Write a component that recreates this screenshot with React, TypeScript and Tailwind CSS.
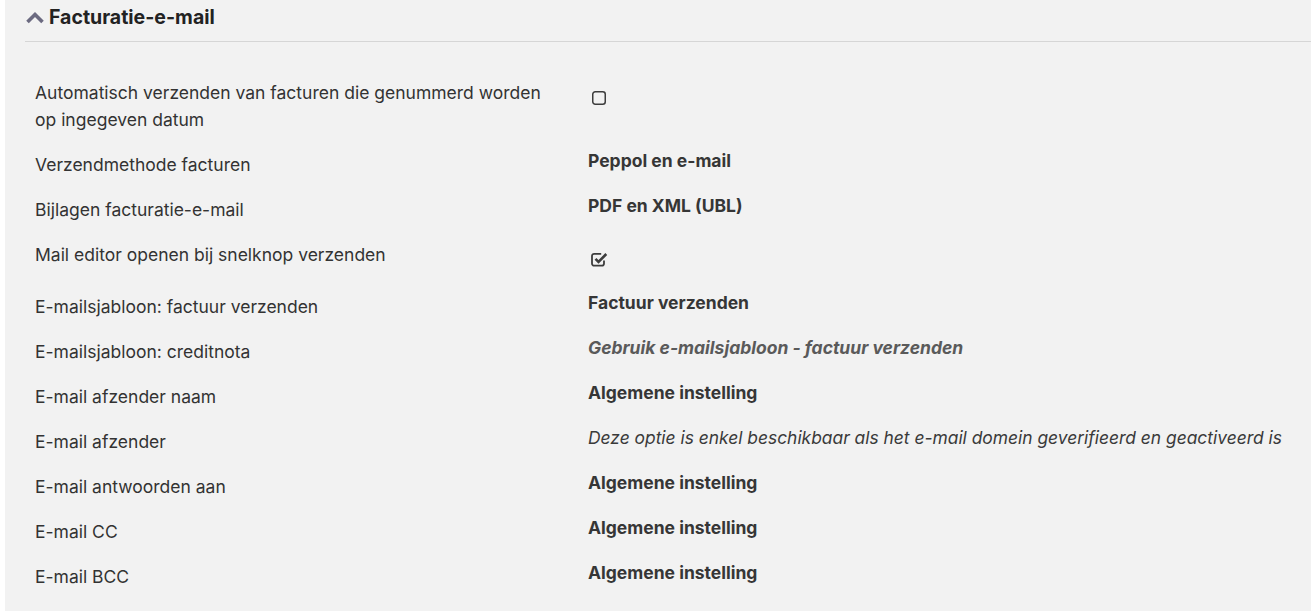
import React from 'react';

type Row = {
  label: string;
  value: React.ReactNode;
  tall?: boolean;
};

const Unchecked = () => (
  <svg width="16" height="16" viewBox="0 0 16 16" className="mt-[15px] ml-[3px]">
    <rect x="1.75" y="1.75" width="12.5" height="12.5" rx="2.5" fill="none" stroke="#3d3d3d" strokeWidth="1.5" />
  </svg>
);

const Checked = () => (
  <svg width="19" height="19" viewBox="0 0 19 19" className="mt-[13px] ml-[2px]">
    <path d="M14 10.5v3a2.2 2.2 0 0 1-2.2 2.2H4.2A2.2 2.2 0 0 1 2 13.5V6a2.2 2.2 0 0 1 2.2-2.2h7" fill="none" stroke="#3d3d3d" strokeWidth="1.8" />
    <path d="M5.5 8.8l3 3L16.3 4" fill="none" stroke="#3d3d3d" strokeWidth="2.6" />
  </svg>
);

const Bold = ({ children }: { children: React.ReactNode }) => (
  <span className="font-bold text-[#363636]">{children}</span>
);

const rows: Row[] = [
  { label: 'Automatisch verzenden van facturen die genummerd worden op ingegeven datum', value: <Unchecked /> },
  { label: 'Verzendmethode facturen', value: <Bold>Peppol en e-mail</Bold> },
  { label: 'Bijlagen facturatie-e-mail', value: <Bold>PDF en XML (UBL)</Bold> },
  { label: 'Mail editor openen bij snelknop verzenden', value: <Checked />, tall: true },
  { label: 'E-mailsjabloon: factuur verzenden', value: <Bold>Factuur verzenden</Bold> },
  {
    label: 'E-mailsjabloon: creditnota',
    value: <span className="font-bold italic text-[#5a5a5a]">Gebruik e-mailsjabloon - factuur verzenden</span>,
  },
  { label: 'E-mail afzender naam', value: <Bold>Algemene instelling</Bold> },
  {
    label: 'E-mail afzender',
    value: (
      <span className="italic text-[17.4px] text-[#3a3a3a]">
        Deze optie is enkel beschikbaar als het e-mail domein geverifieerd en geactiveerd is
      </span>
    ),
  },
  { label: 'E-mail antwoorden aan', value: <Bold>Algemene instelling</Bold> },
  { label: 'E-mail CC', value: <Bold>Algemene instelling</Bold> },
  { label: 'E-mail BCC', value: <Bold>Algemene instelling</Bold> },
];

export default function App() {
  return (
    <div className="w-[1311px] h-[613px] bg-white pl-[5px] overflow-hidden font-['Inter',sans-serif]">
      <div className="h-[611px] bg-[#f2f2f2] pl-[20px]">
        <div className="flex items-center h-[42px] border-b border-[#d6d6d6] pb-[6px]">
          <svg width="20" height="14" viewBox="0 0 20 14" className="mr-[4px] mt-[1px]">
            <path d="M2.5 11L10 3.5l7.5 7.5" fill="none" stroke="#6b6a80" strokeWidth="3.6" />
          </svg>
          <h2 className="text-[19.5px] font-bold text-[#222]">Facturatie-e-mail</h2>
        </div>

        <div className="pt-[28px] pl-[10px]">
          {rows.map((r) => (
            <div key={r.label} className={`flex ${r.tall ? 'h-[52px]' : ''}`}>
              <div className="w-[553px] pr-[30px] py-[9px] text-[17.5px] leading-[27px] text-[#333]">{r.label}</div>
              <div className="pt-[5px] text-[17.5px] leading-[27px]">{r.value}</div>
            </div>
          ))}
        </div>
      </div>
    </div>
  );
}
